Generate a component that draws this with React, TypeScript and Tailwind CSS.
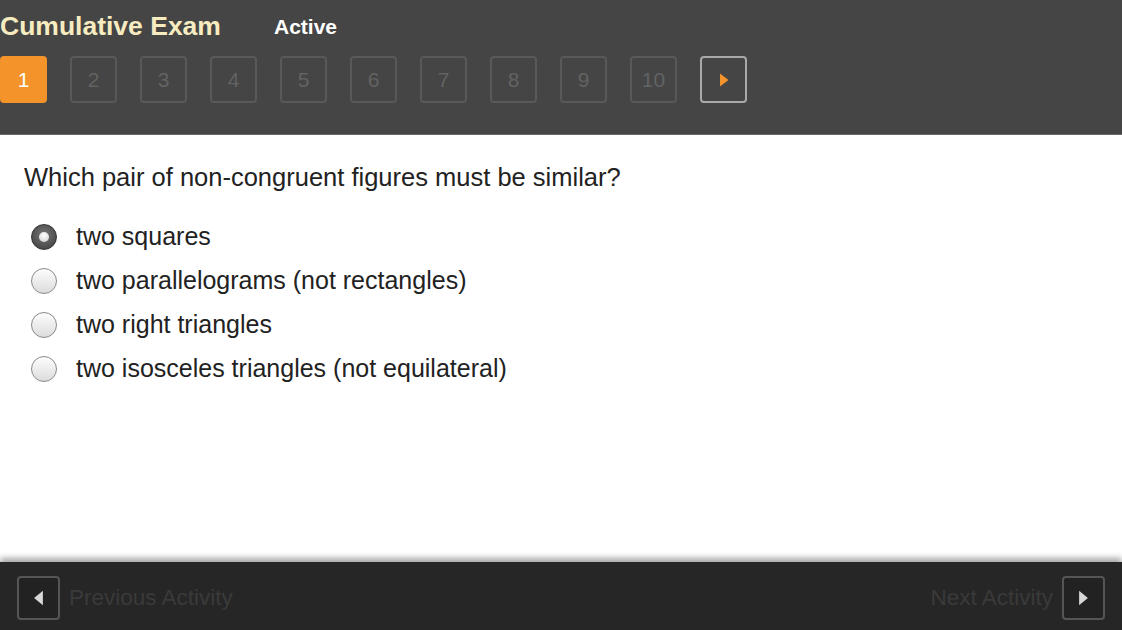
import React from "react";

const options = [
  "two squares",
  "two parallelograms (not rectangles)",
  "two right triangles",
  "two isosceles triangles (not equilateral)",
];

function Radio({ checked }: { checked: boolean }) {
  if (checked) {
    return (
      <span className="flex h-[26px] w-[26px] shrink-0 items-center justify-center rounded-full border border-[#333] bg-[radial-gradient(circle_at_50%_40%,#777,#3a3a3a)]">
        <span className="h-[10px] w-[10px] rounded-full bg-[radial-gradient(circle_at_50%_35%,#fff,#ccc)]" />
      </span>
    );
  }
  return (
    <span className="h-[26px] w-[26px] shrink-0 rounded-full border border-[#8a8a8a] bg-[linear-gradient(#fdfdfd,#dcdcdc)]" />
  );
}

export default function App() {
  const [selected, setSelected] = React.useState(0);

  return (
    <div className="flex h-[630px] w-[1122px] flex-col overflow-hidden bg-white font-['Liberation_Sans',Arial,sans-serif]">
      <header className="h-[135px] shrink-0 border-b border-[#6a6a6a] bg-[#454545]">
        <div className="flex h-[50px] items-center pt-[2px]">
          <h1 className="w-[274px] text-[26.5px] font-bold leading-none text-[#f7ebc0]">
            Cumulative Exam
          </h1>
          <span className="text-[21px] font-bold leading-none text-white">Active</span>
        </div>
        <div className="mt-[6px] flex gap-[23px]">
          {Array.from({ length: 10 }, (_, i) => (
            <button
              key={i}
              className={
                i === 0
                  ? "flex h-[47px] w-[47px] items-center justify-center rounded-[4px] bg-[#f3932a] text-[21px] text-white"
                  : "flex h-[47px] w-[47px] items-center justify-center rounded-[4px] border-2 border-[#595959] text-[21px] text-[#626262]"
              }
            >
              {i + 1}
            </button>
          ))}
          <button className="flex h-[47px] w-[47px] items-center justify-center rounded-[4px] border-2 border-[#a9a9a9]">
            <svg width="10" height="14" viewBox="0 0 10 14">
              <path d="M1 0.5 L9.5 7 L1 13.5 Z" fill="#f3932a" />
            </svg>
          </button>
        </div>
      </header>

      <main className="flex-1 px-[24px] pt-[30px]">
        <p className="text-[25.5px] leading-none text-[#222]">
          Which pair of non-congruent figures must be similar?
        </p>
        <div className="mt-[33px] flex flex-col gap-[18px] pl-[7px]">
          {options.map((o, i) => (
            <label
              key={o}
              className="flex h-[26px] cursor-pointer items-center gap-[19px]"
              onClick={() => setSelected(i)}
            >
              <Radio checked={selected === i} />
              <span className="text-[25px] leading-none text-[#222]">{o}</span>
            </label>
          ))}
        </div>
      </main>

      <footer className="relative flex h-[68px] shrink-0 items-center justify-between bg-[#262626] px-[17px] pt-[3px] shadow-[0_-4px_6px_rgba(0,0,0,0.35)]">
        <div className="flex items-center gap-[9px]">
          <button className="flex h-[44px] w-[43px] items-center justify-center rounded-[4px] border-2 border-[#555] bg-[#222]">
            <svg width="11" height="16" viewBox="0 0 10 14">
              <path d="M9 0.5 L1 7 L9 13.5 Z" fill="#d8d8d8" />
            </svg>
          </button>
          <span className="text-[22.5px] text-[#3a3a3a]">Previous Activity</span>
        </div>
        <div className="flex items-center gap-[9px]">
          <span className="text-[22.5px] text-[#3a3a3a]">Next Activity</span>
          <button className="flex h-[44px] w-[43px] items-center justify-center rounded-[4px] border-2 border-[#555] bg-[#222]">
            <svg width="11" height="16" viewBox="0 0 10 14">
              <path d="M1 0.5 L9 7 L1 13.5 Z" fill="#d8d8d8" />
            </svg>
          </button>
        </div>
      </footer>
    </div>
  );
}
